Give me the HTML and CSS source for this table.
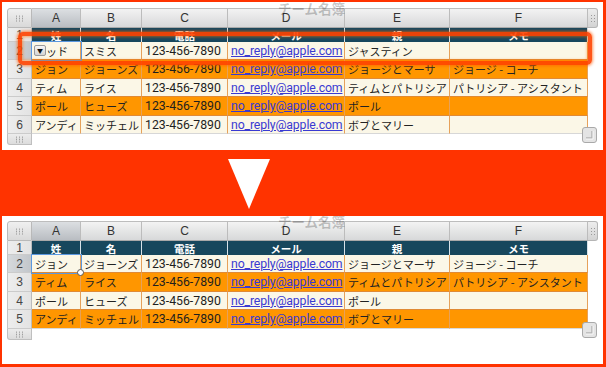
FILE: index.html
```html
<!DOCTYPE html>
<html lang="ja">
<head>
<meta charset="utf-8">
<title>チーム名簿</title>
<link rel="stylesheet" href="styles.css">
</head>
<body>
<div class="frame">
  <section class="panel panel-top">
    <div class="sheet-wrap">
      <div class="title">チーム名簿</div>
      <div class="sheet sheet-6">
        <div class="corner"><span class="dots"></span></div>
        <div class="colhead sel-col">A</div>
        <div class="colhead">B</div>
        <div class="colhead">C</div>
        <div class="colhead">D</div>
        <div class="colhead">E</div>
        <div class="colhead">F</div>
        <div class="grip"><span class="dots dots-v"></span></div>

        <div class="rownum">1</div>
        <div class="h">姓</div><div class="h">名</div><div class="h">電話</div><div class="h">メール</div><div class="h">親</div><div class="h">メモ</div><div class="blank"></div>

        <div class="rownum sel-row">2</div>
        <div class="c cell sel"><span class="dd">▼</span>トッド</div><div class="c cell">スミス</div><div class="c cell num">123-456-7890</div><div class="c cell num"><span class="link">no_reply@apple.com</span></div><div class="c cell">ジャスティン</div><div class="c cell"></div><div class="blank"></div>

        <div class="rownum">3</div>
        <div class="o cell">ジョン</div><div class="o cell">ジョーンズ</div><div class="o cell num">123-456-7890</div><div class="o cell num"><span class="link">no_reply@apple.com</span></div><div class="o cell">ジョージとマーサ</div><div class="o cell">ジョージ - コーチ</div><div class="blank"></div>

        <div class="rownum">4</div>
        <div class="c cell">ティム</div><div class="c cell">ライス</div><div class="c cell num">123-456-7890</div><div class="c cell num"><span class="link">no_reply@apple.com</span></div><div class="c cell">ティムとパトリシア</div><div class="c cell">パトリシア - アシスタント</div><div class="blank"></div>

        <div class="rownum">5</div>
        <div class="o cell">ポール</div><div class="o cell">ヒューズ</div><div class="o cell num">123-456-7890</div><div class="o cell num"><span class="link">no_reply@apple.com</span></div><div class="o cell">ポール</div><div class="o cell"></div><div class="blank"></div>

        <div class="rownum">6</div>
        <div class="c cell last">アンディ</div><div class="c cell last">ミッチェル</div><div class="c cell last num">123-456-7890</div><div class="c cell last num"><span class="link">no_reply@apple.com</span></div><div class="c cell last">ボブとマリー</div><div class="c cell last"></div><div class="blank"></div>

        <div class="foot"><span class="dots"></span></div>
      </div>
      <div class="resize"><svg width="15" height="16" viewBox="0 0 15 16"><rect x="0.5" y="0.5" width="14" height="15" rx="2.5" fill="#e4e4e4" stroke="#a9a9a9"/><path d="M10 4 V11 H4" fill="none" stroke="#b4b4b4" stroke-width="1.5"/><path d="M11 4 V12 H4" fill="none" stroke="#fff" stroke-width="0.8"/></svg></div>
      <div class="highlight"></div>
    </div>
  </section>

  <div class="band">
    <svg class="arrow" width="42" height="50" viewBox="0 0 42 50"><polygon points="0,0 42,0 21,50" fill="#fff"/></svg>
  </div>

  <section class="panel panel-bottom">
    <div class="sheet-wrap">
      <div class="title">チーム名簿</div>
      <div class="sheet sheet-5">
        <div class="corner"><span class="dots"></span></div>
        <div class="colhead sel-col">A</div>
        <div class="colhead">B</div>
        <div class="colhead">C</div>
        <div class="colhead">D</div>
        <div class="colhead">E</div>
        <div class="colhead">F</div>
        <div class="grip"><span class="dots dots-v"></span></div>

        <div class="rownum">1</div>
        <div class="h">姓</div><div class="h">名</div><div class="h">電話</div><div class="h">メール</div><div class="h">親</div><div class="h">メモ</div><div class="blank"></div>

        <div class="rownum sel-row">2</div>
        <div class="c cell sel">ジョン<span class="knob"></span></div><div class="c cell">ジョーンズ</div><div class="c cell num">123-456-7890</div><div class="c cell num"><span class="link">no_reply@apple.com</span></div><div class="c cell">ジョージとマーサ</div><div class="c cell">ジョージ - コーチ</div><div class="blank"></div>

        <div class="rownum">3</div>
        <div class="o cell">ティム</div><div class="o cell">ライス</div><div class="o cell num">123-456-7890</div><div class="o cell num"><span class="link">no_reply@apple.com</span></div><div class="o cell">ティムとパトリシア</div><div class="o cell">パトリシア - アシスタント</div><div class="blank"></div>

        <div class="rownum">4</div>
        <div class="c cell">ポール</div><div class="c cell">ヒューズ</div><div class="c cell num">123-456-7890</div><div class="c cell num"><span class="link">no_reply@apple.com</span></div><div class="c cell">ポール</div><div class="c cell"></div><div class="blank"></div>

        <div class="rownum">5</div>
        <div class="o cell last">アンディ</div><div class="o cell last">ミッチェル</div><div class="o cell last num">123-456-7890</div><div class="o cell last num"><span class="link">no_reply@apple.com</span></div><div class="o cell last">ボブとマリー</div><div class="o cell last"></div><div class="blank"></div>

        <div class="foot"><span class="dots"></span></div>
      </div>
      <div class="resize"><svg width="15" height="16" viewBox="0 0 15 16"><rect x="0.5" y="0.5" width="14" height="15" rx="2.5" fill="#e4e4e4" stroke="#a9a9a9"/><path d="M10 4 V11 H4" fill="none" stroke="#b4b4b4" stroke-width="1.5"/><path d="M11 4 V12 H4" fill="none" stroke="#fff" stroke-width="0.8"/></svg></div>
    </div>
  </section>
</div>
</body>
</html>
```

FILE: styles.css
```css
html, body {
  margin: 0;
  padding: 0;
}
body {
  background: #ff3300;
  font-family: "Noto Sans CJK JP", sans-serif;
  font-size: 11px;
  color: #222;
}
.frame {
  width: 606px;
  height: 367px;
  box-sizing: border-box;
  padding: 2px 3px 3px 2px;
  display: flex;
  flex-direction: column;
}
.panel {
  background: #fff;
  height: 148px;
  box-sizing: border-box;
  overflow: hidden;
  padding-left: 5px;
}
.panel-top { padding-top: 6px; }
.panel-bottom { padding-top: 5px; }

.band {
  height: 66px;
  display: flex;
  align-items: flex-start;
  padding: 9px 0 0 226px;
  box-sizing: border-box;
}
.arrow { display: block; }

.sheet-wrap {
  position: relative;
  width: 591px;
}
.title {
  position: absolute;
  left: 271px;
  top: -7px;
  font-family: "Noto Sans CJK JP", sans-serif;
  font-size: 13.5px;
  line-height: 14px;
  font-weight: bold;
  color: rgba(0, 0, 0, 0.22);
  z-index: 2;
}

.sheet {
  display: grid;
  grid-template-columns: 25px 49px 61px 86px 117px 105px 138px 10px;
}
.sheet-6 { grid-template-rows: 20px 14px 18px 19px 18px 19px 18px 11px; }
.sheet-5 { grid-template-rows: 20px 14px 18px 19px 18px 19px 11px; }

.sheet > div {
  box-sizing: border-box;
  min-width: 0;
  white-space: nowrap;
  overflow: hidden;
}

.corner {
  background: linear-gradient(#f0f0f0, #d9d9d9);
  border: 1px solid #b9b9b9;
  border-radius: 3px 0 0 0;
  display: flex;
  align-items: center;
  justify-content: center;
}
.dots {
  display: block;
  width: 9px;
  height: 7px;
  background-image: radial-gradient(circle, #9a9a9a 0.6px, transparent 0.9px);
  background-size: 3px 2.4px;
}
.dots-v {
  width: 6px;
  height: 9px;
  background-size: 3px 3px;
}
.colhead {
  background: linear-gradient(#f3f3f3, #d7d8d9);
  border-top: 1px solid #bdbdbd;
  border-right: 1px solid #bcbcbc;
  border-bottom: 1px solid #a9a9a9;
  display: flex;
  align-items: center;
  justify-content: center;
  color: #333;
  font-family: "Liberation Sans", sans-serif;
  font-size: 12px;
}
.colhead.sel-col {
  background: linear-gradient(#dcdfe2, #b9bdc2);
}
.grip {
  background: linear-gradient(#ededed, #d3d3d3);
  border: 1px solid #b5b5b5;
  border-left: 0;
  border-radius: 0 3px 3px 0;
  display: flex;
  align-items: center;
  justify-content: center;
}
.rownum {
  background: linear-gradient(to right, #ededed, #e3e3e3);
  border-left: 1px solid #c4c4c4;
  border-right: 1px solid #bcbcbc;
  border-bottom: 1px solid #cbcbcb;
  display: flex;
  align-items: center;
  justify-content: center;
  color: #444;
  font-family: "Liberation Sans", sans-serif;
  font-size: 12px;
}
.rownum.sel-row {
  background: linear-gradient(to right, #d6d9dc, #c2c6ca);
}
.foot {
  background: linear-gradient(#ececec, #dcdcdc);
  border: 1px solid #bfbfbf;
  border-top: 0;
  border-radius: 0 0 0 3px;
  display: flex;
  align-items: center;
  justify-content: center;
}
.h {
  background: #17475d;
  color: #fff;
  font-weight: bold;
  border-right: 1px solid #d8e2e8;
  display: flex;
  align-items: center;
  justify-content: center;
  font-size: 10.5px;
}
.h:nth-last-child(2) { border-right: 0; }
.cell {
  border-right: 1px solid #e6a15a;
  border-bottom: 1px solid #e08a35;
  display: flex;
  align-items: center;
  padding-left: 3px;
  position: relative;
}
.num {
  font-family: Roboto, "Liberation Sans", sans-serif;
  font-size: 12.3px;
  color: #1e1e1e;
}
.c { background: #fbf7e7; }
.o { background: #ff9600; }
.cell.last.c { border-bottom-color: #d7d7d7; }
.cell.last.o { border-bottom-color: #d9d9d9; }
.link {
  color: #3a3ad2;
  text-decoration: underline;
  letter-spacing: -0.15px;
}
.blank { background: transparent; }

.sel {
  overflow: visible !important;
  outline: 1.5px solid #5b98e0;
  outline-offset: -0.5px;
  z-index: 1;
}
.dd {
  position: absolute;
  left: 2px;
  top: 3px;
  width: 12px;
  height: 11px;
  box-sizing: border-box;
  border: 1px solid #9a9a9a;
  border-radius: 2px;
  background: linear-gradient(#f6f6f6, #d4d4d4);
  font-size: 6px;
  line-height: 9px;
  text-align: center;
  color: #111;
}
.knob {
  position: absolute;
  right: -4px;
  bottom: -4px;
  width: 5px;
  height: 5px;
  border: 1px solid #555;
  border-radius: 50%;
  background: #fff;
}

.resize {
  position: absolute;
  right: 1px;
  bottom: 2px;
  width: 15px;
  height: 16px;
}
.resize svg { display: block; }

.highlight {
  position: absolute;
  left: 11px;
  top: 24px;
  width: 574px;
  height: 33px;
  box-sizing: border-box;
  border: 4px solid rgba(255, 66, 0, 0.9);
  border-radius: 5px;
  box-shadow: 0 0 3px 1px rgba(255, 90, 0, 0.65), inset 0 0 3px 1px rgba(255, 110, 0, 0.55);
  z-index: 3;
}
```
